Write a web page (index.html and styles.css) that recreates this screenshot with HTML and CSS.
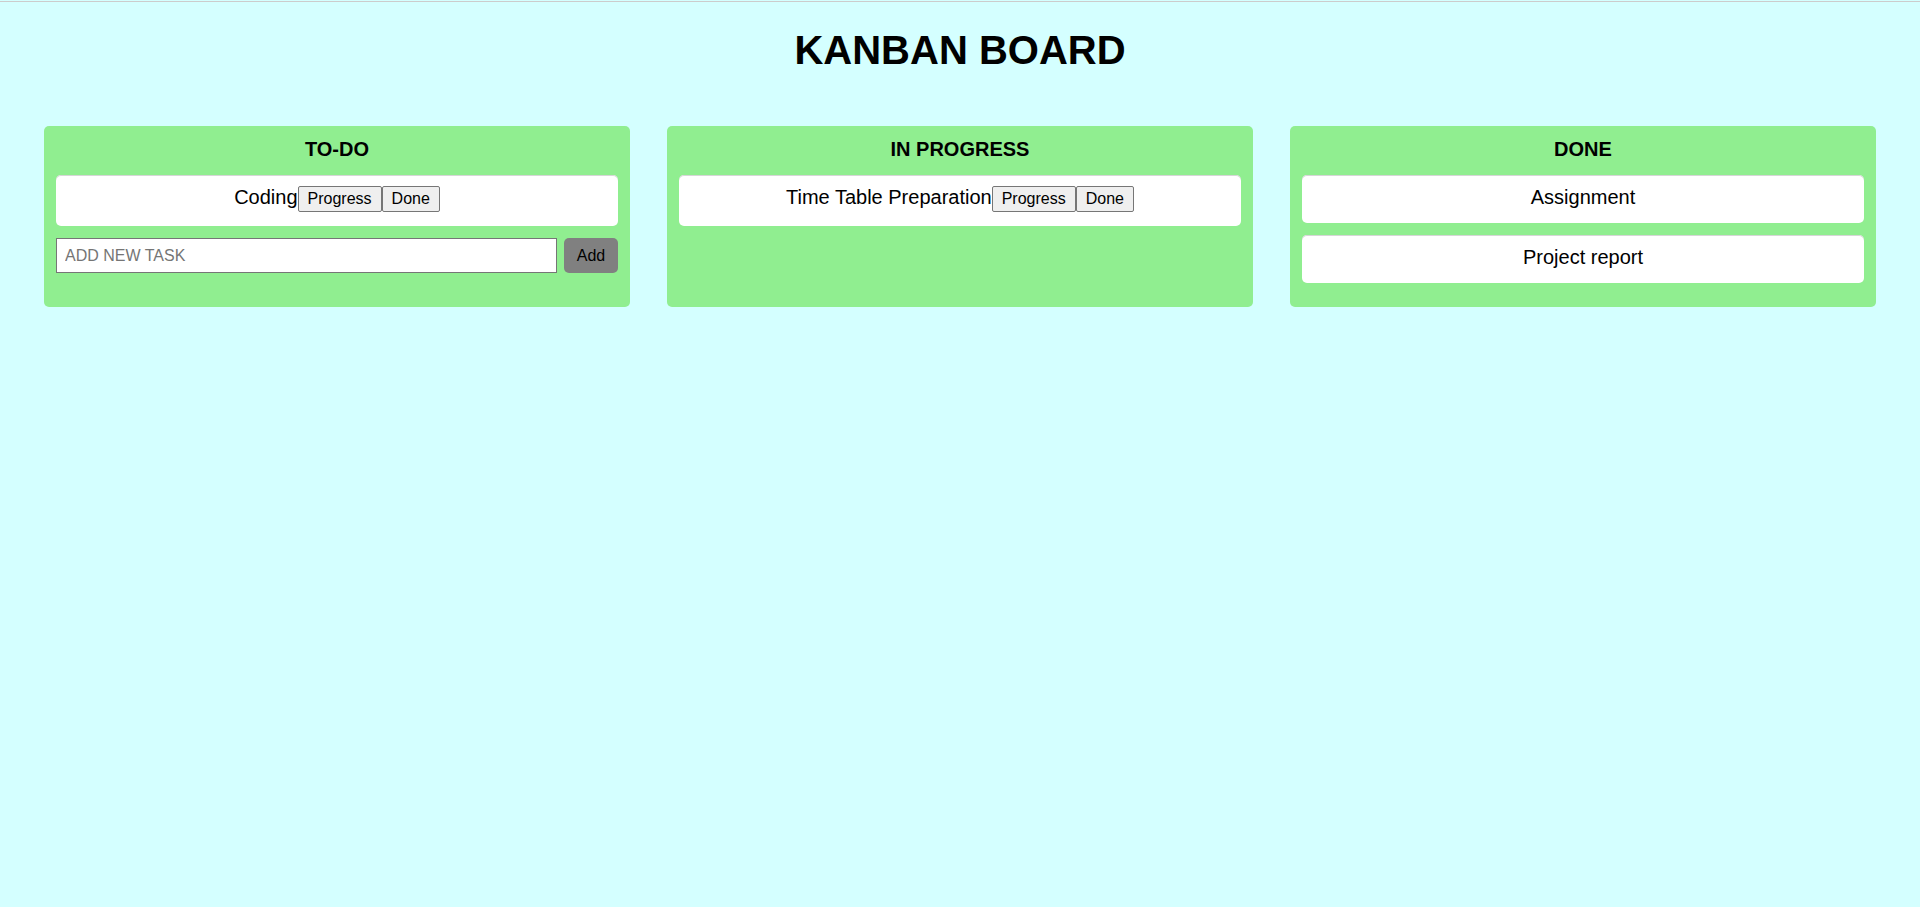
FILE: index.html
```html
<!DOCTYPE html>
<html lang="en">
<head>
<meta charset="utf-8">
<title>Kanban Board</title>
<link rel="stylesheet" href="styles.css">
</head>
<body>
<h1 class="title">KANBAN BOARD</h1>
<main class="board">
  <section class="column">
    <h3 class="column-title">TO-DO</h3>
    <div class="task">Coding<button class="task-btn">Progress</button><button class="task-btn">Done</button></div>
    <form class="add-form">
      <input class="add-input" type="text" placeholder="ADD NEW TASK">
      <button class="add-btn" type="button">Add</button>
    </form>
  </section>
  <section class="column">
    <h3 class="column-title">IN PROGRESS</h3>
    <div class="task">Time Table Preparation<button class="task-btn">Progress</button><button class="task-btn">Done</button></div>
  </section>
  <section class="column">
    <h3 class="column-title">DONE</h3>
    <div class="task">Assignment</div>
    <div class="task">Project report</div>
  </section>
</main>
</body>
</html>
```
FILE: styles.css
```css
html {
  background: #d4ffff;
}
body {
  margin: 1px 0 0;
  border-top: 1px solid #cccccc;
  font-family: "Liberation Sans", Arial, sans-serif;
  color: #000;
  background: #d4ffff;
}
.title {
  margin: 25px 0 0;
  font-size: 40px;
  line-height: 46px;
  font-weight: bold;
  text-align: center;
}
.board {
  display: flex;
  align-items: stretch;
  gap: 37px;
  padding: 0 44px;
  margin-top: 53px;
}
.column {
  flex: 1;
  background: #90ee90;
  border-radius: 5px;
  padding: 12px;
  min-width: 0;
}
.column-title {
  margin: 0 0 14px;
  font-size: 20px;
  line-height: 23px;
  font-weight: bold;
  text-align: center;
}
.task {
  background: #ffffff;
  border-radius: 5px;
  box-shadow: inset 0 1px 0 #d6d6d6;
  padding: 11px 12px 14px;
  margin-bottom: 12px;
  font-size: 20px;
  line-height: 23px;
  text-align: center;
}
.task-btn {
  font-family: "Liberation Sans", Arial, sans-serif;
  font-size: 16px;
  line-height: 18px;
  color: #000;
  background: #efefef;
  border: 1px solid #767676;
  border-radius: 2px;
  padding: 3px 9px;
  margin: 0;
  vertical-align: baseline;
}
.add-form {
  display: flex;
  gap: 7px;
  margin: 1px 0 21px;
}
.add-input {
  flex: 1;
  min-width: 0;
  height: 35px;
  box-sizing: border-box;
  border: 1px solid #767676;
  padding: 0 8px;
  font-family: "Liberation Sans", Arial, sans-serif;
  font-size: 16px;
  background: #fff;
}
.add-input::placeholder {
  color: #757575;
}
.add-btn {
  width: 54px;
  height: 35px;
  border: none;
  border-radius: 5px;
  background: #808080;
  color: #000;
  font-family: "Liberation Sans", Arial, sans-serif;
  font-size: 16px;
  padding: 0;
}
```
